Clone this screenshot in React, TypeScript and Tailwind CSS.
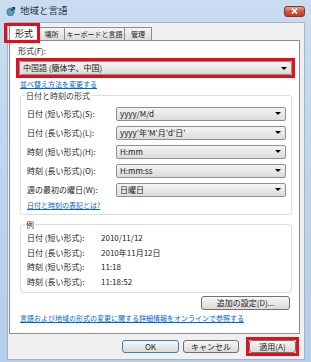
import React from 'react';

const font = { fontFamily: '"Noto Sans CJK JP", "Noto Sans", sans-serif' };

const Combo: React.FC<{ value: string; className?: string }> = ({ value, className }) => (
  <div
    className={`flex items-center justify-between h-[14px] rounded-[2px] border border-[#8e8f8f] bg-gradient-to-b from-[#f4f4f4] to-[#dcdcdc] pl-[3px] pr-[4px] text-[8px] text-[#1a1a1a] leading-none ${className ?? ''}`}
  >
    <span>{value}</span>
    <span className="w-0 h-0 border-l-[3px] border-r-[3px] border-t-[3px] border-l-transparent border-r-transparent border-t-black"></span>
  </div>
);

const Button: React.FC<{ label: string; className?: string; primary?: boolean }> = ({ label, className, primary }) => (
  <div
    className={`flex items-center justify-center h-[13px] rounded-[3px] border ${
      primary ? 'border-[#3c7fb1]' : 'border-[#707070]'
    } bg-gradient-to-b from-[#f6f6f6] to-[#dadada] text-[8px] text-[#1a1a1a] leading-none ${className ?? ''}`}
  >
    {label}
  </div>
);

const FORMAT_ROWS = [
  { label: '日付 (短い形式)(S):', value: 'yyyy/M/d' },
  { label: '日付 (長い形式)(L):', value: "yyyy'年'M'月'd'日'" },
  { label: '時刻 (短い形式)(H):', value: 'H:mm' },
  { label: '時刻 (長い形式)(O):', value: 'H:mm:ss' },
  { label: '週の最初の曜日(W):', value: '日曜日' },
];

const EXAMPLE_ROWS = [
  { label: '日付 (短い形式):', value: '2010/11/12' },
  { label: '日付 (長い形式):', value: '2010年11月12日' },
  { label: '時刻 (短い形式):', value: '11:18' },
  { label: '時刻 (長い形式):', value: '11:18:52' },
];

const TABS = [
  { label: '場所', w: 'w-[27px]' },
  { label: 'キーボードと言語', w: 'w-[61px]' },
  { label: '管理', w: 'w-[28px]' },
];

const App: React.FC = () => {
  return (
    <div className="w-[311px] h-[362px] flex flex-col bg-gradient-to-b from-[#c9dcf1] to-[#b4cde9] overflow-hidden" style={font}>
      {/* Title bar */}
      <div className="h-[22px] flex items-center pl-[5px] pr-[6px] shrink-0">
        <svg width="11" height="11" viewBox="0 0 12 12" className="mr-[4px]">
          <circle cx="6" cy="6.5" r="4.5" fill="#3a8ad6" />
          <path d="M3 5 Q5 3 6 5 T9 6 Q8 9 6 10 Q4 8 3 5Z" fill="#5cb85c" />
          <path d="M7 1 L11 1 L11 5 L9.5 3.5 L7.5 5.5 L6.5 4.5 L8.5 2.5Z" fill="#2e3b4e" />
        </svg>
        <span className="text-[9.5px] text-[#2a3646] leading-none">地域と言語</span>
        <div className="ml-auto w-[21px] h-[11px] rounded-[3px] border border-[#7a3a30] bg-gradient-to-b from-[#e8a08e] via-[#d0573f] to-[#c23a22] flex items-center justify-center">
          <svg width="7" height="6" viewBox="0 0 7 6">
            <path d="M1 0.5 L6 5.5 M6 0.5 L1 5.5" stroke="white" strokeWidth="1.6" />
          </svg>
        </div>
      </div>

      {/* Dialog body */}
      <div className="flex-1 ml-[7px] mr-[6px] mb-[2px] bg-[#f0f0f0] border border-[#9fb4cf] flex flex-col pl-[1px] pr-[4px]">
        {/* Tabs */}
        <div className="flex items-end h-[17px] relative z-10">
          <div className="relative -mb-[1px]">
            <div className="h-[17px] w-[30px] bg-white border border-b-0 border-[#898c95] flex items-center justify-center text-[9px] leading-none text-[#1a1a1a]">
              形式
            </div>
            <div className="absolute -left-[5px] -right-[1px] -top-[1px] -bottom-[2px] border-[3px] border-[#e3101b]"></div>
          </div>
          {TABS.map((t) => (
            <div
              key={t.label}
              className={`h-[13px] ${t.w} -ml-[1px] first:ml-0 bg-gradient-to-b from-[#f5f5f5] to-[#dcdcdc] border border-b-0 border-[#898c95] flex items-center justify-center text-[7px] leading-none text-[#1a1a1a] whitespace-nowrap`}
            >
              {t.label}
            </div>
          ))}
        </div>

        {/* Tab panel */}
        <div className="h-[294px] bg-white border border-[#898c95] flex flex-col">
          <div className="mt-[4px] ml-[8px] h-[12px] text-[8px] leading-[12px] text-[#1a1a1a]">形式(F):</div>
          <div className="ml-[6px] mr-[4px] mt-[1px] border-[3px] border-[#e3101b] h-[20px]">
            <Combo value="中国語 (簡体字、中国)" />
          </div>
          <div className="ml-[10px] mt-[1px] h-[10px] text-[7px] leading-[10px] text-[#0066cc] underline">並べ替え方法を変更する</div>

          {/* Date/time formats */}
          <div className="relative ml-[10px] mr-[7px] mt-[6px] h-[120px] rounded-[3px] border border-[#d5dfe5] px-[6px] pt-[8px]">
            <span className="absolute -top-[6px] left-[4px] bg-white px-[1px] text-[8px] leading-[12px] text-[#333]">日付と時刻の形式</span>
            {FORMAT_ROWS.map((r) => (
              <div key={r.label} className="flex items-center h-[19px]">
                <span className="w-[89px] text-[8px] leading-none text-[#1a1a1a] whitespace-nowrap">{r.label}</span>
                <Combo value={r.value} className="flex-1 mr-[-1px]" />
              </div>
            ))}
            <div className="mt-[1px] text-[7px] leading-[10px] text-[#0066cc] underline">日付と時刻の表記とは?</div>
          </div>

          {/* Examples */}
          <div className="relative ml-[10px] mr-[7px] mt-[9px] h-[69px] rounded-[3px] border border-[#d5dfe5] px-[6px] pt-[6px]">
            <span className="absolute -top-[6px] left-[4px] bg-white px-[1px] text-[8px] leading-[12px] text-[#333]">例</span>
            {EXAMPLE_ROWS.map((r) => (
              <div key={r.label} className="flex items-center h-[14.5px] text-[8px] leading-none text-[#1a1a1a]">
                <span className="w-[74px] whitespace-nowrap">{r.label}</span>
                <span>{r.value}</span>
              </div>
            ))}
          </div>

          <div className="flex justify-end mr-[9px] mt-[3px]">
            <Button label="追加の設定(D)..." className="w-[89px] h-[14px]" />
          </div>
          <div className="ml-[10px] mt-[3px] text-[7px] leading-[10px] text-[#0066cc] underline whitespace-nowrap">
            言語および地域の形式の変更に関する詳細情報をオンラインで参照する
          </div>
        </div>

        {/* Bottom buttons */}
        <div className="flex items-center justify-end mt-[3px] gap-[4px]">
          <Button label="OK" primary className="w-[57px]" />
          <Button label="キャンセル" className="w-[56px]" />
          <div className="border-[3px] border-[#e3101b] ml-[3px] mr-[1px]">
            <Button label="適用(A)" className="w-[47px]" />
          </div>
        </div>
      </div>
    </div>
  );
};

export default App;
